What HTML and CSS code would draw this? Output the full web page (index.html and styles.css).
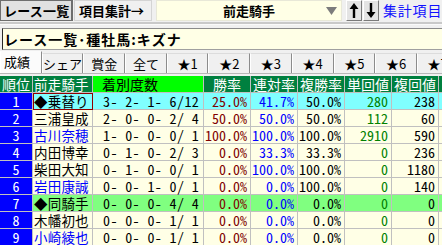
FILE: index.html
```html
<!DOCTYPE html>
<html lang="ja">
<head>
<meta charset="utf-8">
<link rel="stylesheet" href="styles.css">
</head>
<body>
<div class="page">
<div class="toolbar">
  <div class="tbtn pressed">レース一覧</div>
  <div class="tbtn raised">項目集計→</div>
  <div class="combo">
    <span class="combo-text">前走騎手</span>
    <svg class="caret" width="11" height="8" viewBox="0 0 11 8"><path d="M0 0H11L5.5 8Z" fill="#7c7c7c"/></svg>
  </div>
  <div class="abtn up"><svg width="10" height="15" viewBox="0 0 10 15"><path d="M5 0L9.5 6H6.2V15H3.8V6H0.5Z" fill="#000"/></svg></div>
  <div class="abtn"><svg width="10" height="15" viewBox="0 0 10 15"><path d="M5 15L9.5 9H6.2V0H3.8V9H0.5Z" fill="#000"/></svg></div>
  <div class="menu">集計項目メニュー</div>
</div>
<div class="sep"></div>
<div class="title">レース一覧･種牡馬:キズナ</div>
<div class="tabs">
  <div class="tab active">成績</div>
  <div class="tab">シェア</div>
  <div class="tab">賞金</div>
  <div class="tab">全て</div>
  <div class="tab">★1</div>
  <div class="tab">★2</div>
  <div class="tab">★3</div>
  <div class="tab">★4</div>
  <div class="tab">★5</div>
  <div class="tab">★6</div>
  <div class="tab">★7</div>
</div>
<div class="grid">
  <div class="row head">
    <div class="c rank">順位</div>
    <div class="c name">前走騎手</div>
    <div class="c rec lime">着別度数</div>
    <div class="c ctr">勝率</div>
    <div class="c ctr">連対率</div>
    <div class="c ctr">複勝率</div>
    <div class="c ctr">単回値</div>
    <div class="c ctr">複回値</div>
    <div class="c ctr"></div>
  </div>
  <div class="row cyan">
    <div class="c rank num">1</div>
    <div class="c name sel">◆乗替り</div>
    <div class="c rec num">3- 2- 1- 6/12</div>
    <div class="c num win">25.0%</div>
    <div class="c num ren">41.7%</div>
    <div class="c num fuku">50.0%</div>
    <div class="c num tan">280</div>
    <div class="c num fuku">238</div>
    <div class="c num win"></div>
  </div>
  <div class="row">
    <div class="c rank num">2</div>
    <div class="c name">三浦皇成</div>
    <div class="c rec num">2- 0- 0- 2/ 4</div>
    <div class="c num win">50.0%</div>
    <div class="c num ren">50.0%</div>
    <div class="c num fuku">50.0%</div>
    <div class="c num tan">112</div>
    <div class="c num fuku">60</div>
    <div class="c num win"></div>
  </div>
  <div class="row">
    <div class="c rank num">3</div>
    <div class="c name blue">古川奈穂</div>
    <div class="c rec num">1- 0- 0- 0/ 1</div>
    <div class="c num win">100.0%</div>
    <div class="c num ren">100.0%</div>
    <div class="c num fuku">100.0%</div>
    <div class="c num tan">2910</div>
    <div class="c num fuku">590</div>
    <div class="c num win"></div>
  </div>
  <div class="row">
    <div class="c rank num">4</div>
    <div class="c name">内田博幸</div>
    <div class="c rec num">0- 1- 0- 2/ 3</div>
    <div class="c num win">0.0%</div>
    <div class="c num ren">33.3%</div>
    <div class="c num fuku">33.3%</div>
    <div class="c num tan">0</div>
    <div class="c num fuku">236</div>
    <div class="c num win"></div>
  </div>
  <div class="row">
    <div class="c rank num">5</div>
    <div class="c name">柴田大知</div>
    <div class="c rec num">0- 1- 0- 0/ 1</div>
    <div class="c num win">0.0%</div>
    <div class="c num ren">100.0%</div>
    <div class="c num fuku">100.0%</div>
    <div class="c num tan">0</div>
    <div class="c num fuku">1180</div>
    <div class="c num win"></div>
  </div>
  <div class="row">
    <div class="c rank num">6</div>
    <div class="c name blue">岩田康誠</div>
    <div class="c rec num">0- 0- 1- 0/ 1</div>
    <div class="c num win">0.0%</div>
    <div class="c num ren">0.0%</div>
    <div class="c num fuku">100.0%</div>
    <div class="c num tan">0</div>
    <div class="c num fuku">140</div>
    <div class="c num win"></div>
  </div>
  <div class="row green">
    <div class="c rank num">7</div>
    <div class="c name">◆同騎手</div>
    <div class="c rec num">0- 0- 0- 4/ 4</div>
    <div class="c num win">0.0%</div>
    <div class="c num ren">0.0%</div>
    <div class="c num fuku">0.0%</div>
    <div class="c num tan">0</div>
    <div class="c num fuku">0</div>
    <div class="c num win"></div>
  </div>
  <div class="row">
    <div class="c rank num">8</div>
    <div class="c name">木幡初也</div>
    <div class="c rec num">0- 0- 0- 1/ 1</div>
    <div class="c num win">0.0%</div>
    <div class="c num ren">0.0%</div>
    <div class="c num fuku">0.0%</div>
    <div class="c num tan">0</div>
    <div class="c num fuku">0</div>
    <div class="c num win"></div>
  </div>
  <div class="row">
    <div class="c rank num">9</div>
    <div class="c name blue">小崎綾也</div>
    <div class="c rec num">0- 0- 0- 1/ 1</div>
    <div class="c num win">0.0%</div>
    <div class="c num ren">0.0%</div>
    <div class="c num fuku">0.0%</div>
    <div class="c num tan">0</div>
    <div class="c num fuku">0</div>
    <div class="c num win"></div>
  </div>
</div>
</div>
</body>
</html>
```
FILE: styles.css
```css
html, body {
  margin: 0;
  padding: 0;
}
body {
  background: #f0f0f0;
  font-family: "Noto Sans CJK JP", sans-serif;
  font-size: 14px;
  color: #000;
}
.page {
  width: 442px;
  height: 245px;
  overflow: hidden;
}

/* toolbar */
.toolbar {
  display: flex;
  height: 21px;
  white-space: nowrap;
}
.tbtn {
  box-sizing: border-box;
  height: 21px;
  line-height: 19px;
  font-weight: bold;
  font-size: 13px;
  flex: none;
}
.tbtn.pressed {
  width: 73px;
  padding-left: 3px;
  background: #e1e1e1;
  border: 1px solid #6e6e6e;
  border-right-width: 2px;
  letter-spacing: 0.2px;
}
.tbtn.raised {
  width: 78px;
  margin-left: 1px;
  padding-left: 4px;
  background: #f0f0f0;
  border: 1px solid #d4d4d4;
}
.combo {
  box-sizing: border-box;
  flex: none;
  width: 186px;
  height: 21px;
  margin-left: 4px;
  background: #ffffe6;
  border: 1px solid #e8e8d8;
  display: flex;
  align-items: center;
  justify-content: center;
  position: relative;
}
.combo-text {
  font-weight: bold;
  font-size: 13px;
  line-height: 19px;
}
.caret {
  position: absolute;
  right: 4px;
  top: 6px;
}
.abtn {
  box-sizing: border-box;
  flex: none;
  width: 16px;
  height: 21px;
  margin-left: 1px;
  background: #e4e4e4;
  border: 1px solid;
  border-color: #ffffff #7a7a7a #7a7a7a #ffffff;
  display: flex;
  align-items: center;
  justify-content: center;
}
.abtn.up {
  margin-left: 4px;
}
.menu {
  margin-left: 4px;
  color: #1010ff;
  font-size: 14px;
  letter-spacing: 0.8px;
  line-height: 21px;
}

.sep {
  height: 2px;
  margin-top: 1px;
  background: #c9c9c9;
  border-bottom: 1px solid #fafafa;
}

.title {
  box-sizing: border-box;
  height: 22px;
  margin-top: 3px;
  margin-left: 2px;
  background: #ffffe6;
  border-top: 1px solid #8a8a8a;
  border-left: 1px solid #2a2a2a;
  border-bottom: 1px solid #a0a0a0;
  font-weight: bold;
  font-size: 14px;
  line-height: 20px;
  padding-left: 1px;
  letter-spacing: 1px;
  white-space: nowrap;
}

/* tabs */
.tabs {
  display: flex;
  height: 22px;
  margin-top: 1px;
  border-bottom: 1px solid #b8b8b8;
  white-space: nowrap;
}
.tab {
  box-sizing: border-box;
  width: 41.7px;
  flex: none;
  height: 20px;
  margin-top: 2px;
  border-top: 1px solid #dcdcdc;
  border-left: 1px solid #ffffff;
  border-right: 1px solid #8c8c8c;
  font-size: 13px;
  line-height: 19px;
  text-align: center;
  background: #f0f0f0;
}
.tab.active {
  height: 22px;
  margin-top: 0;
  padding-left: 3px;
  text-align: left;
  background: #fbfbfb;
  border-top-color: #fbfbfb;
}

/* grid */
.grid {
  margin-top: 2px;
  width: 480px;
}
.row {
  display: grid;
  grid-template-columns: 33px 60px 111px 47px 47px 47px 47px 47px 47px;
  height: 17px;
  background: #ffffe6;
}
.row.cyan { background: #80ffff; }
.row.green { background: #80ff80; }
.c {
  box-sizing: border-box;
  height: 17px;
  border-right: 1px solid #c0c0c0;
  border-bottom: 1px solid #c0c0c0;
  font-size: 14px;
  line-height: 16px;
  white-space: pre;
}
.head .c {
  background: #00803f;
  color: #fff;
}
.head .c.lime {
  background: #00ff00;
  color: #000;
}
.rank {
  background: #0000ff;
  color: #fff;
  text-align: center;
}
.name {
  padding-left: 1px;
  font-size: 13.5px;
  letter-spacing: 0.2px;
}
.name.sel {
  border: 1px solid #900000;
  padding-left: 0;
  line-height: 15px;
}
.blue { color: #0000ff; }
.rec {
  padding-left: 10px;
}
.head .rec {
  padding-left: 9px;
}
.num {
  font-feature-settings: "hwid" 1;
  text-align: right;
  padding-right: 3px;
}
.rank.num {
  text-align: center;
  padding-right: 0;
}
.rec.num {
  text-align: left;
  letter-spacing: 0.4px;
}
.ctr { text-align: center; }
.win { color: #800000; }
.ren { color: #0000ff; }
.fuku { color: #000; }
.tan { color: #008000; }
```
